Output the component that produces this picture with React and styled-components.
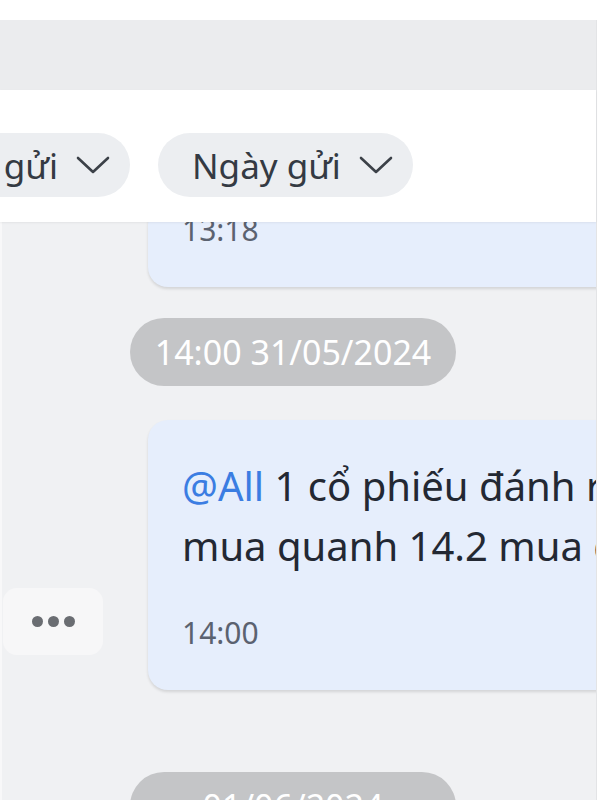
import React from "react";
import styled, { createGlobalStyle } from "styled-components";

const GlobalStyle = createGlobalStyle`
  html, body {
    margin: 0;
    padding: 0;
    background: #ffffff;
  }
  body {
    font-family: "Noto Sans", "Open Sans", Arial, sans-serif;
  }
`;

const Chevron = () => (
  <svg width="34" height="18" viewBox="0 0 34 18" fill="none">
    <polyline
      points="2,2 17,16 32,2"
      stroke="#3c4148"
      strokeWidth="2.6"
      strokeLinecap="round"
      strokeLinejoin="round"
    />
  </svg>
);

const App = () => {
  return (
    <>
      <GlobalStyle />
      <Page>
        <Main>
          <SearchBar />
          <FilterRow>
            <ClipLeft>
              <FilterPill>
                Người gửi <Chevron />
              </FilterPill>
            </ClipLeft>
            <FilterPill>
              Ngày gửi <Chevron />
            </FilterPill>
          </FilterRow>

          <Chat>
            <MessageRow $first>
              <Side />
              <Bubble $first>
                <Time>13:18</Time>
              </Bubble>
            </MessageRow>

            <DateChip>14:00 31/05/2024</DateChip>

            <MessageRow>
              <Side>
                <MoreBtn>
                  <Dot />
                  <Dot />
                  <Dot />
                </MoreBtn>
              </Side>
              <Bubble>
                <Line>
                  <Mention>@All</Mention> 1 cổ phiếu đánh rất nhanh
                </Line>
                <Line>mua quanh 14.2 mua dần</Line>
                <Time $gap>14:00</Time>
              </Bubble>
            </MessageRow>

            <DateChip $next>01/06/2024</DateChip>
          </Chat>
        </Main>
      </Page>
    </>
  );
};
export default App;

const Page = styled.div`
  width: 600px;
  height: 800px;
  overflow: hidden;
  background: #ffffff;
  padding-top: 20px;
  box-sizing: border-box;
`;

const Main = styled.div`
  width: 597px;
  height: 780px;
  display: flex;
  flex-direction: column;
  border-right: 1px solid #e3e4e6;
  box-sizing: border-box;
`;

const SearchBar = styled.div`
  height: 70px;
  flex-shrink: 0;
  background: #ebecee;
`;

const FilterRow = styled.div`
  height: 132px;
  flex-shrink: 0;
  box-sizing: border-box;
  padding-top: 43px;
  display: flex;
  align-items: flex-start;
  gap: 28px;
  background: #ffffff;
  position: relative;
  z-index: 2;
  box-shadow: 0 1px 2px rgba(0, 0, 0, 0.06);
`;

const ClipLeft = styled.div`
  width: 130px;
  flex-shrink: 0;
  display: flex;
  justify-content: flex-end;
`;

const FilterPill = styled.div`
  flex-shrink: 0;
  height: 64px;
  box-sizing: border-box;
  padding: 0 20px 0 34px;
  border-radius: 32px;
  background: #eceef1;
  display: flex;
  align-items: center;
  gap: 18px;
  font-size: 35px;
  color: #343a43;
  white-space: nowrap;
`;

const Chat = styled.div`
  flex: 1;
  min-height: 0;
  overflow: hidden;
  background: #f0f1f3;
  box-shadow: inset 2px 0 0 #f8f8f9;
  display: flex;
  flex-direction: column;
`;

const MessageRow = styled.div`
  display: flex;
  align-items: flex-end;
  flex-shrink: 0;
  margin-top: ${(p) => (p.$first ? "-17px" : "34px")};
`;

const Side = styled.div`
  width: 148px;
  flex-shrink: 0;
  padding-bottom: 35px;
  box-sizing: border-box;
  display: flex;
`;

const MoreBtn = styled.div`
  width: 100px;
  height: 67px;
  margin-left: 3px;
  border-radius: 14px;
  background: #f7f7f8;
  display: flex;
  align-items: center;
  justify-content: center;
  gap: 5px;
`;

const Dot = styled.span`
  width: 11px;
  height: 11px;
  border-radius: 50%;
  background: #6a6d72;
`;

const Bubble = styled.div`
  width: 520px;
  flex-shrink: 0;
  box-sizing: border-box;
  padding: 36px 34px 40px 34px;
  border-radius: 20px;
  background: #e6eefc;
  box-shadow: 0 2px 3px rgba(0, 0, 0, 0.12);
  ${(p) => p.$first && "padding-top: 8px;"}
`;

const Line = styled.div`
  font-size: 40px;
  line-height: 60px;
  color: #232833;
  white-space: nowrap;
`;

const Mention = styled.span`
  color: #3b7de2;
`;

const Time = styled.div`
  font-size: 30px;
  line-height: 34px;
  color: #5b6270;
  margin-top: ${(p) => (p.$gap ? "40px" : "0")};
`;

const DateChip = styled.div`
  align-self: flex-start;
  flex-shrink: 0;
  margin: ${(p) => (p.$next ? "82px" : "31px")} 0 0 130px;
  width: 326px;
  height: 68px;
  border-radius: 34px;
  background: #c4c5c7;
  color: #ffffff;
  font-size: 34px;
  display: flex;
  align-items: center;
  justify-content: center;
  white-space: nowrap;
`;
